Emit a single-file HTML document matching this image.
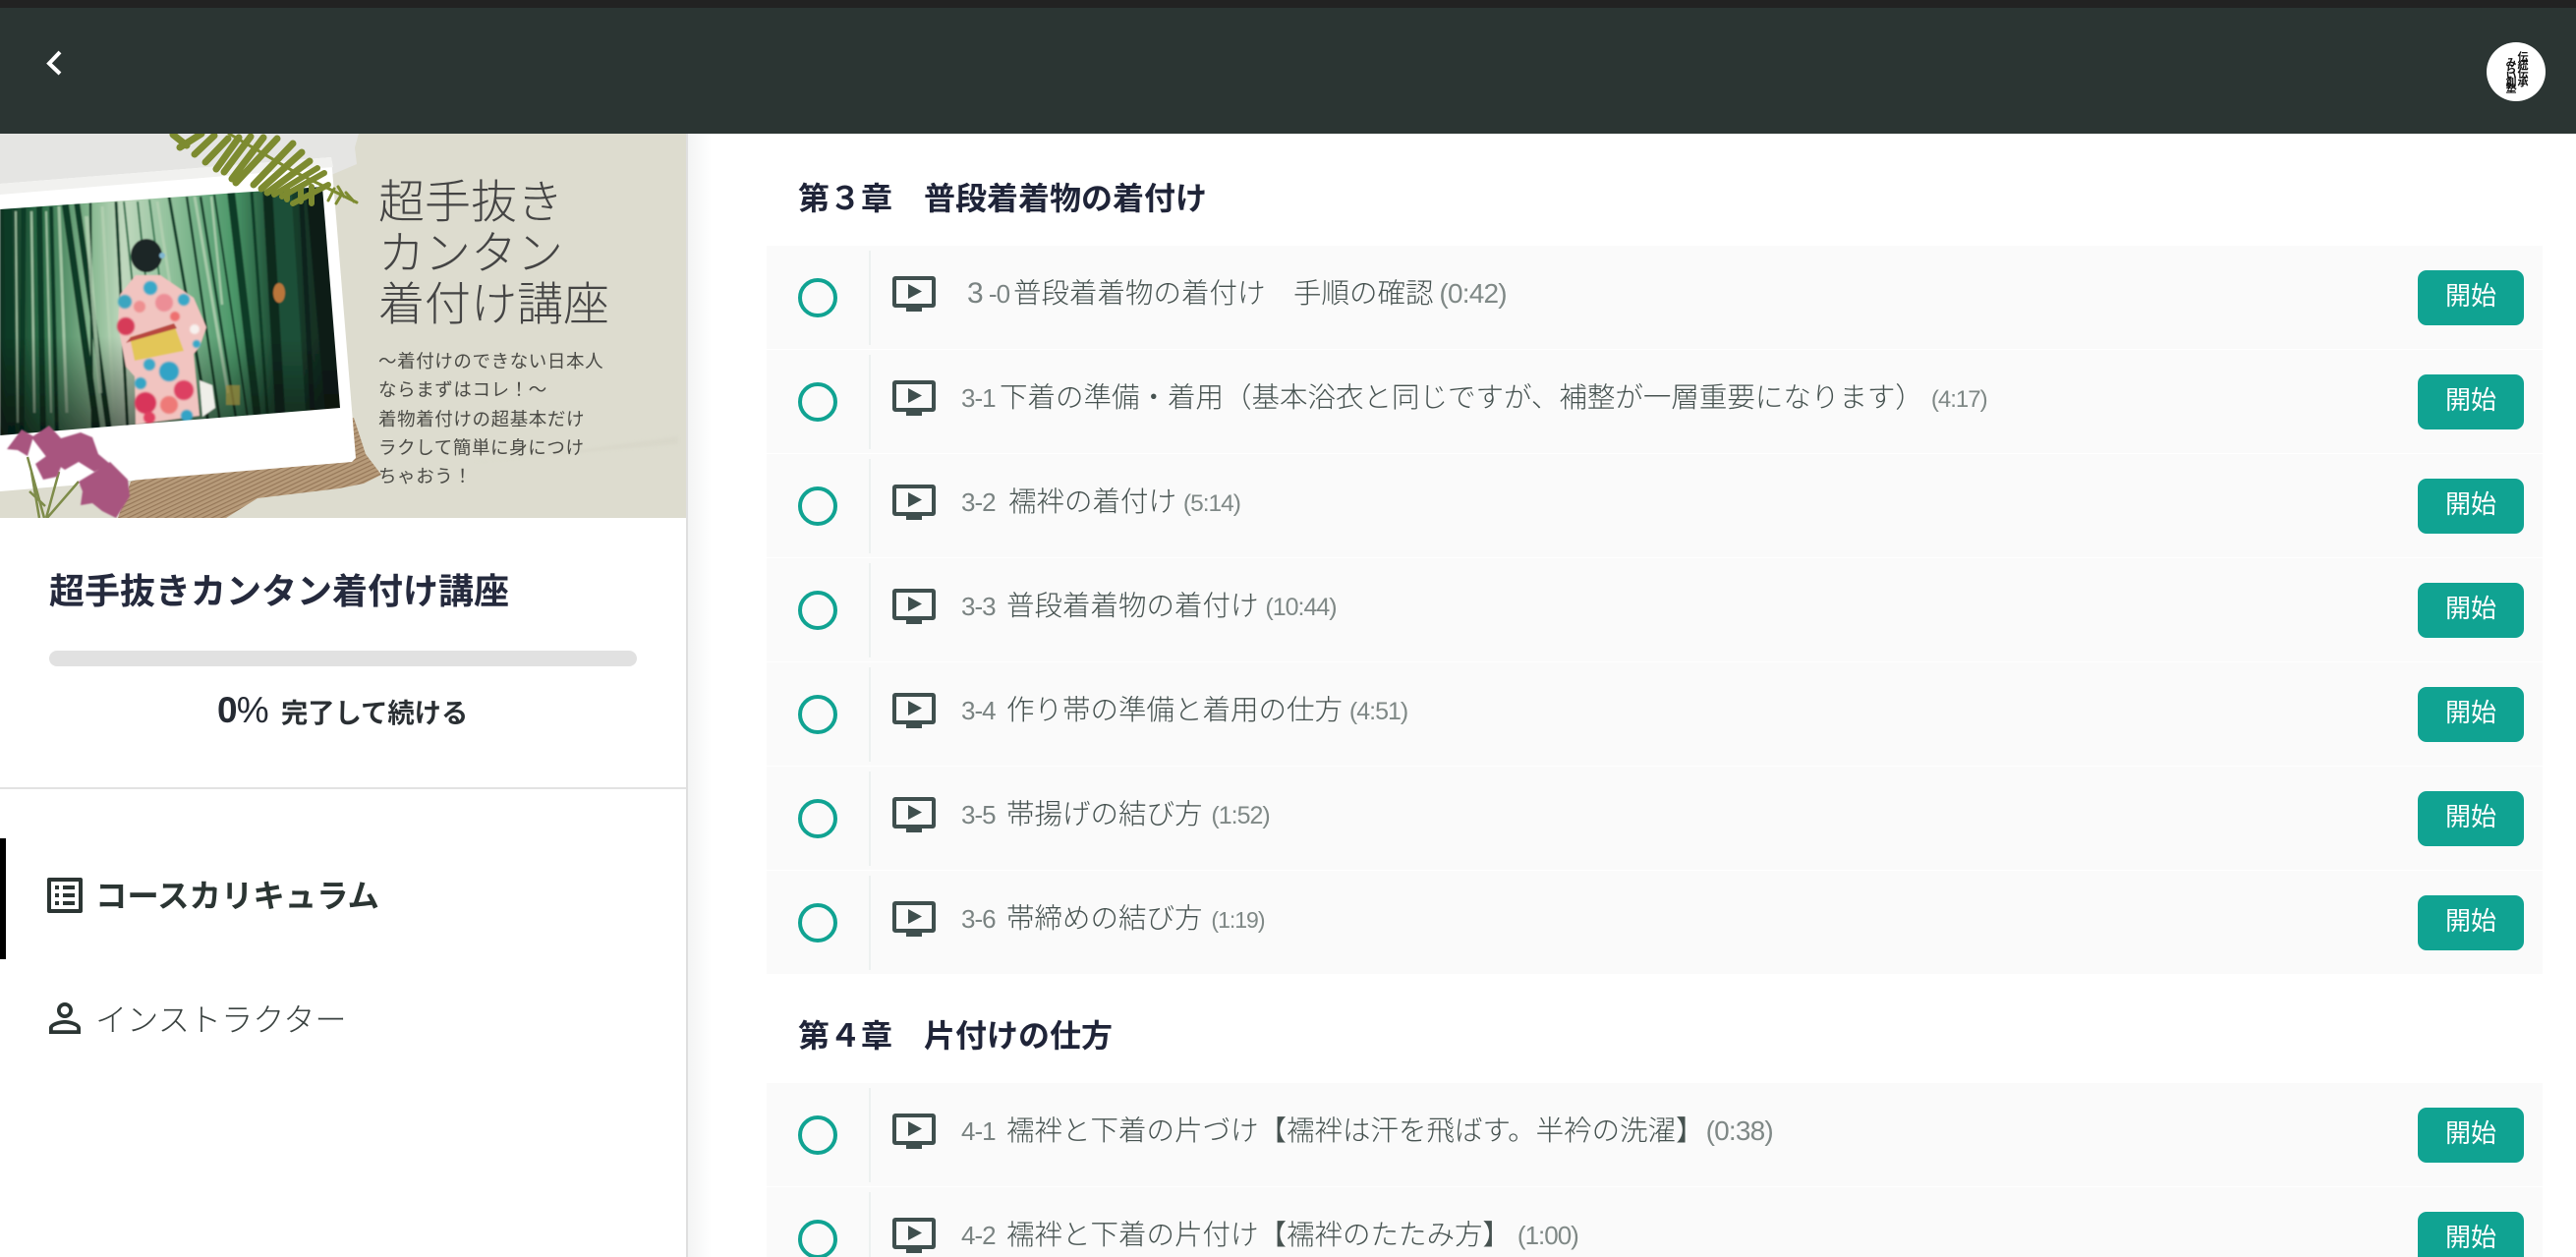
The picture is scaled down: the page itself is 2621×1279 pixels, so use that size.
<!DOCTYPE html>
<html lang="ja">
<head>
<meta charset="utf-8">
<title>超手抜きカンタン着付け講座</title>
<style>
html,body{margin:0;padding:0;background:#fff;width:2621px;height:1279px;overflow:hidden}
#p{position:relative;width:2621px;height:1279px;overflow:hidden;font-family:"Liberation Sans","Noto Sans CJK JP",sans-serif}
.a{position:absolute;white-space:nowrap}
.r{position:absolute;left:780px;width:1807px;height:105px;background:#fafafa}
.c{position:absolute;left:32px;top:33px;width:32px;height:32px;border:4px solid #10a392;border-radius:50%}
.d{position:absolute;left:104px;top:5px;width:2px;height:96px;background:#edf1f0}
.m{position:absolute;left:128px;top:31px;width:44px;height:36px}
.t{position:absolute;left:198px;top:29px;line-height:40px;font-size:28.500px;color:#465250;white-space:nowrap;font-weight:300}
.t .n{display:inline-block;width:48px;font-size:26px;letter-spacing:-1px;color:#7a8382}
.t .u{font-size:25px;letter-spacing:-1px;color:#7f8886;margin-left:2px}
.b{position:absolute;left:1680px;top:25px;width:108px;height:56px;border-radius:9px;background:#10a392;color:#fff;font-size:26px;line-height:52px;text-align:center}
.h{position:absolute;left:812px;font-size:32px;font-weight:700;color:#1f2438;line-height:44px;white-space:nowrap}
.av{position:absolute;writing-mode:vertical-rl;font-size:11px;line-height:12px;font-weight:700;color:#111;white-space:nowrap}
</style>
</head>
<body>
<div id="p">
<svg width="0" height="0" style="position:absolute">
<symbol id="mon" viewBox="0 0 44 36"><path fill="#3f4f4e" fill-rule="evenodd" d="M3 0H41a3 3 0 0 1 3 3V29a3 3 0 0 1-3 3H30V36H14V32H3a3 3 0 0 1-3-3V3a3 3 0 0 1 3-3ZM4 4V28H40V4ZM16 8 30 15.500 16 23Z"/></symbol>
</svg>

<div class="a" style="left:0;top:0;width:2621px;height:8px;background:#222"></div>
<div class="a" style="left:0;top:8px;width:2621px;height:128px;background:#2b3533"></div>
<svg class="a" style="left:40px;top:45px" width="32" height="38" viewBox="0 0 32 38"><path d="M21 8 10 19.500 21 30" fill="none" stroke="#fff" stroke-width="4"/></svg>
<div class="a" style="left:2530px;top:43px;width:60px;height:60px;border-radius:50%;background:#fff"></div>
<div class="av" style="left:2560px;top:52px;letter-spacing:-2.500px">伝統伝承</div>
<div class="av" style="left:2548px;top:58px;letter-spacing:-4.500px">みらい創塾</div>

<!-- sidebar shadow -->
<div class="a" style="left:698px;top:136px;width:2px;height:1143px;background:#dfdfdf"></div>
<div class="a" style="left:700px;top:136px;width:24px;height:1143px;background:linear-gradient(90deg,#f3f4f4,#fff)"></div>

<!-- hero -->
<svg class="a" style="left:0;top:136px" width="698" height="391" viewBox="0 136 698 391">
<defs>
<linearGradient id="bg" x1="0" x2="1"><stop offset="0" stop-color="#0c3020"/><stop offset=".12" stop-color="#2c6e48"/><stop offset=".26" stop-color="#84b68e"/><stop offset=".36" stop-color="#c0d8be"/><stop offset=".5" stop-color="#8fc09a"/><stop offset=".68" stop-color="#4a9668"/><stop offset=".8" stop-color="#1c4a33"/><stop offset="1" stop-color="#0d1e18"/></linearGradient>
<linearGradient id="shade" x1="0" x2="0" y1="0" y2="1"><stop offset="0" stop-color="#000" stop-opacity="0"/><stop offset=".6" stop-color="#000" stop-opacity="0"/><stop offset="1" stop-color="#000" stop-opacity=".55"/></linearGradient>
<clipPath id="ph"><polygon points="0,213 328,190 346,415 0,443"/></clipPath>
<pattern id="jute" width="4" height="4" patternUnits="userSpaceOnUse" patternTransform="rotate(-25)"><rect width="4" height="4" fill="#b79b7a"/><rect width="4" height="1.200" fill="#967859"/></pattern>
<filter id="s"><feGaussianBlur stdDeviation=".7"/></filter>
<filter id="s2"><feGaussianBlur stdDeviation="1.200"/></filter>
</defs>
<rect x="0" y="136" width="698" height="391" fill="#dddccf"/>
<path d="M480 470 690 452 690 444 560 462Z" fill="#d5d4c6" opacity=".5" filter="url(#s2)"/>
<polygon points="0,136 365,136 361,150 363,167 337,178 0,205" fill="#e5e5e3"/>
<polygon points="360,425 372,462 388,483 370,492 345,497 262,507 230,527 120,527 133,490" fill="url(#jute)"/>
<polygon points="0,187 337,160 362,466 358,470 0,500" fill="#fff"/>
<polygon points="0,187 337,160 339,170 0,198" fill="#f1f1ef"/>
<g clip-path="url(#ph)"><g filter="url(#s)">
<rect x="0" y="185" width="350" height="262" fill="url(#bg)"/>
<g fill="none" stroke="#0c3a25">
<path stroke-width="8" d="M8 210 12 445"/><path stroke-width="5" d="M24 210 22 445"/><path stroke-width="6" d="M40 210 44 445"/><path stroke-width="4" d="M52 210 58 445"/>
<path stroke-width="7" d="M66 205 100 445"/><path stroke-width="6" d="M78 205 112 445"/><path stroke-width="2.500" d="M92 205 94 445"/><path stroke-width="3" d="M118 205 130 440"/>
<path stroke-width="2" stroke="#2d6e4a" d="M126 205 136 300"/><path stroke-width="2" stroke="#2d6e4a" d="M140 205 150 300"/><path stroke-width="2" stroke="#3a7a55" d="M152 203 180 420"/><path stroke-width="3" d="M172 200 212 430"/><path stroke-width="2.500" d="M190 200 224 430"/><path stroke-width="2.500" d="M204 200 240 425"/><path stroke-width="2" d="M218 198 252 425"/>
<path stroke-width="8" d="M235 195 262 425"/><path stroke-width="3" d="M256 195 272 420"/>
<path stroke-width="22" stroke="#1e5038" d="M285 190 300 420"/><path stroke-width="10" stroke="#0d2a1f" d="M272 190 285 420"/><path stroke-width="22" stroke="#0c1f19" d="M322 190 342 420"/><path stroke-width="5" stroke="#10221c" d="M306 190 318 420"/>
</g>
<g fill="none" stroke="#b5d2b3" opacity=".8">
<path stroke-width="2" d="M16 215 18 430"/><path stroke-width="2.500" d="M32 215 35 420"/><path stroke-width="2" d="M47 215 52 420"/><path stroke-width="3" d="M60 210 68 420"/><path stroke-width="3" d="M104 210 116 420"/><path stroke-width="4" d="M88 220 102 400"/><path stroke-width="3" d="M160 205 190 400"/><path stroke-width="3" d="M198 200 232 400"/><path stroke-width="2.500" d="M215 200 226 310"/>
</g>
<ellipse cx="284" cy="298" rx="6" ry="10" fill="#b9763a"/>
<rect x="0" y="185" width="350" height="262" fill="url(#shade)"/>
<rect x="230" y="392" width="14" height="20" fill="#a08a3a" opacity=".7"/>
<polygon points="203,387 216,392 219,415 206,424" fill="#efefe9"/>
<polygon points="138,280 163,280 197,303 210,333 203,353 197,360 203,423 138,432 137,383 128,373 120,330 122,300" fill="#f1c4c0"/>
<g filter="url(#s)">
<circle cx="153" cy="293" r="7" fill="#38a8c8"/><circle cx="127" cy="307" r="7" fill="#3aa5c0"/><circle cx="187" cy="305" r="6" fill="#38a8c8"/><circle cx="128" cy="332" r="9" fill="#d63a58"/><circle cx="142" cy="312" r="6" fill="#ee8f90"/><circle cx="167" cy="308" r="9" fill="#ec8e96"/><circle cx="178" cy="322" r="5" fill="#ee6f70"/><circle cx="198" cy="335" r="5" fill="#f7f1ee"/><circle cx="200" cy="350" r="4" fill="#38a8c8"/><circle cx="172" cy="378" r="10" fill="#33a3c6"/><circle cx="152" cy="371" r="6" fill="#3aa8c8"/><circle cx="143" cy="390" r="6" fill="#35a5c5"/><circle cx="148" cy="410" r="11" fill="#d8355a"/><circle cx="187" cy="397" r="10" fill="#dd3f62"/><circle cx="172" cy="412" r="9" fill="#ee7a78"/><circle cx="190" cy="423" r="6" fill="#33a3c6"/><circle cx="152" cy="425" r="6" fill="#e04060"/>
</g>
<polygon points="132,343 177,330 187,357 137,367" fill="#e3c659"/>
<polygon points="128,349 133,343 177,329 180,334 134,347" fill="#b8473f"/>
<ellipse cx="149" cy="260" rx="16" ry="17" fill="#1f2628"/>
<circle cx="165" cy="260" r="3" fill="#7fb6d0"/>
</g></g>
<g fill="none" stroke="#7d8b30" stroke-linecap="round" stroke-width="7">
<path d="M176 137 190 148M205 136 183 150M218 138 198 157M232 141 209 165M243 140 220 172M255 139 228 175M268 140 236 182M282 141 240 186M298 146 258 188M307 155 266 192M315 164 272 196"/>
<path stroke-width="6" d="M323 171 279 198M330 176 287 200M334 188 298 207M317 190 317 207M306 192 306 205M292 190 292 203"/>
<path stroke-width="3" d="M233 136 300 175 363 206M340 192 334 204M348 197 342 207M352 196 360 205M344 190 350 200"/>
</g>
<g stroke="#7e8c4a" stroke-width="2.500" fill="none"><path d="M40 527 32 480M45 527 28 465M47 527 60 480M48 527 80 490M46 515 30 500"/></g>
<g fill="#a8547f" filter="url(#s)">
<polygon points="7,457 22,437 34,444 28,464 18,458"/>
<polygon points="32,445 50,433 62,446 82,440 94,445 100,462 112,472 96,480 80,470 66,478 48,466"/>
<polygon points="36,472 50,462 64,470 58,485 44,488"/>
<polygon points="80,490 100,478 112,470 130,488 132,505 118,527 104,520 94,512 82,514 84,500"/>
</g>
</svg>
<div class="a" style="left:385px;top:179.500px;font-size:47px;line-height:52px;color:#444;font-weight:300;white-space:pre">超手抜き
カンタン
着付け講座</div>
<div class="a" style="left:385px;top:353px;font-size:18.500px;line-height:29.300px;color:#4b4b46;letter-spacing:.6px;white-space:pre">〜着付けのできない日本人
ならまずはコレ！〜
着物着付けの超基本だけ
ラクして簡単に身につけ
ちゃおう！</div>

<!-- sidebar -->
<div class="a" style="left:50px;top:578.500px;font-size:36px;line-height:46px;font-weight:700;color:#252a3d">超手抜きカンタン着付け講座</div>
<div class="a" style="left:50px;top:662px;width:598px;height:16px;border-radius:8px;background:#e1e1e1"></div>
<div class="a" style="left:221px;top:700px;font-size:37px;line-height:46px;font-weight:700;color:#252a33;letter-spacing:-.8px">0<span style="font-weight:400">%</span></div>
<div class="a" style="left:286px;top:706px;font-size:27.300px;line-height:40px;font-weight:700;color:#2a2f33">完了して続ける</div>
<div class="a" style="left:0;top:801px;width:698px;height:2px;background:#e2e2e2"></div>
<div class="a" style="left:0;top:853px;width:6px;height:123px;background:#000"></div>
<svg class="a" style="left:42px;top:887px" width="48" height="48" viewBox="0 0 24 24"><path fill="#2b3533" d="M19 5v14H5V5h14m1.100-2H3.900c-.5 0-.9.4-.9.9v16.200c0 .4.4.9.9.9h16.200c.4 0 .9-.5.9-.9V3.900c0-.5-.5-.9-.9-.9zM11 7h6v2h-6V7zm0 4h6v2h-6v-2zm0 4h6v2h-6zM7 7h2v2H7zm0 4h2v2H7zm0 4h2v2H7z"/></svg>
<div class="a" style="left:97px;top:889px;font-size:32.400px;line-height:46px;font-weight:700;color:#2b3533">コースカリキュラム</div>
<svg class="a" style="left:42px;top:1012px" width="48" height="48" viewBox="0 0 24 24"><path fill="#2b3533" d="M12 5.900c1.160 0 2.100.94 2.100 2.100s-.94 2.100-2.100 2.100S9.900 9.160 9.900 8s.94-2.100 2.100-2.100m0 9c2.970 0 6.100 1.460 6.100 2.100v1.100H5.900V17c0-.64 3.130-2.100 6.100-2.100M12 4C9.790 4 8 5.790 8 8s1.790 4 4 4 4-1.790 4-4-1.790-4-4-4zm0 9c-2.670 0-8 1.340-8 4v3h16v-3c0-2.660-5.330-4-8-4z"/></svg>
<div class="a" style="left:97px;top:1015px;font-size:32.200px;line-height:46px;font-weight:300;color:#3a4240">インストラクター</div>

<!-- chapter 3 -->
<div class="h" style="top:179.500px">第３章　普段着着物の着付け</div>

<div class="r" style="top:250px"><div class="c"></div><div class="d"></div><svg class="m"><use href="#mon"/></svg><div class="t" style="left:204px"><span class="n" style="width:47px"><span style="font-size:30px">3</span> -0</span>普段着着物の着付け　手順の確認 <span class="u" style="font-size:28px;letter-spacing:-.8px;margin-left:-2px">(0:42)</span></div><div class="b">開始</div></div>

<div class="r" style="top:356px"><div class="c"></div><div class="d"></div><svg class="m"><use href="#mon"/></svg><div class="t"><span class="n" style="width:39px">3-1</span>下着の準備・着用（基本浴衣と同じですが、補整が一層重要になります） <span class="u" style="margin-left:0;font-size:24px">(4:17)</span></div><div class="b">開始</div></div>

<div class="r" style="top:462px"><div class="c"></div><div class="d"></div><svg class="m"><use href="#mon"/></svg><div class="t"><span class="n">3-2</span>襦袢の着付け <span class="u" style="margin-left:-1px;font-size:24.500px">(5:14)</span></div><div class="b">開始</div></div>

<div class="r" style="top:568px"><div class="c"></div><div class="d"></div><svg class="m"><use href="#mon"/></svg><div class="t"><span class="n" style="width:46px">3-3</span>普段着着物の着付け <span class="u" style="margin-left:-1px">(10:44)</span></div><div class="b">開始</div></div>

<div class="r" style="top:674px"><div class="c"></div><div class="d"></div><svg class="m"><use href="#mon"/></svg><div class="t"><span class="n" style="width:46px">3-4</span>作り帯の準備と着用の仕方 <span class="u" style="margin-left:-1px">(4:51)</span></div><div class="b">開始</div></div>

<div class="r" style="top:780px"><div class="c"></div><div class="d"></div><svg class="m"><use href="#mon"/></svg><div class="t"><span class="n" style="width:46px">3-5</span>帯揚げの結び方 <span class="u" style="margin-left:1px">(1:52)</span></div><div class="b">開始</div></div>

<div class="r" style="top:886px"><div class="c"></div><div class="d"></div><svg class="m"><use href="#mon"/></svg><div class="t"><span class="n" style="width:46px">3-6</span>帯締めの結び方 <span class="u" style="margin-left:1px;font-size:23px">(1:19)</span></div><div class="b">開始</div></div>

<!-- chapter 4 -->
<div class="h" style="top:1031.500px">第４章　片付けの仕方</div>

<div class="r" style="top:1102px"><div class="c"></div><div class="d"></div><svg class="m"><use href="#mon"/></svg><div class="t"><span class="n" style="width:46px">4-1</span>襦袢と下着の片づけ【襦袢は汗を飛ばす。半衿の洗濯】 <span class="u" style="font-size:28px;letter-spacing:-.8px;margin-left:-6px">(0:38)</span></div><div class="b">開始</div></div>

<div class="r" style="top:1208px"><div class="c"></div><div class="d"></div><svg class="m"><use href="#mon"/></svg><div class="t"><span class="n" style="width:46px">4-2</span>襦袢と下着の片付け【襦袢のたたみ方】 <span class="u" style="font-size:26px;margin-left:-1px">(1:00)</span></div><div class="b">開始</div></div>
</div>
</body>
</html>
